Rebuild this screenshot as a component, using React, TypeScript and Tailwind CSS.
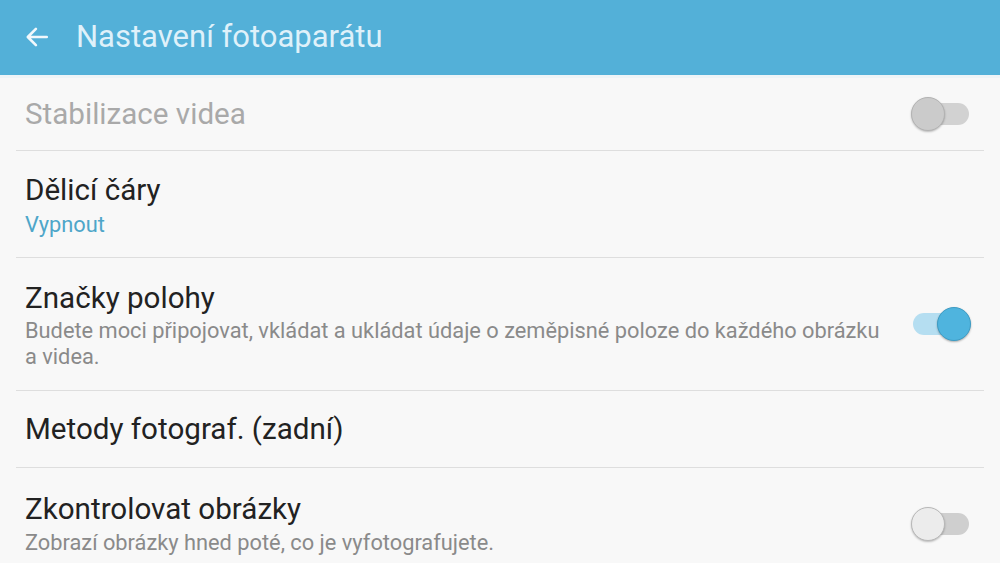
import React from "react";

function Toggle({ on, disabled }: { on: boolean; disabled?: boolean }) {
  if (on) {
    return (
      <div className="relative w-[60px] h-[36px] flex items-center">
        <div className="w-[54px] h-[22px] rounded-full bg-[#b5def1] ml-[2px]" />
        <div className="absolute right-0 top-[1px] w-[34px] h-[34px] rounded-full bg-[#4fb4de] border border-[#3d9cc4] shadow-[0_1px_2px_rgba(0,0,0,0.3)]" />
      </div>
    );
  }
  return (
    <div className="relative w-[60px] h-[36px] flex items-center">
      <div className={`w-[56px] h-[22px] rounded-full ml-[2px] ${disabled ? "bg-[#d2d2d2]" : "bg-[#cfcfcf]"}`} />
      <div
        className={`absolute left-0 top-[1px] w-[34px] h-[34px] rounded-full border shadow-[0_1px_2px_rgba(0,0,0,0.25)] ${
          disabled ? "bg-[#cbcbcb] border-[#b3b3b3]" : "bg-[#ececec] border-[#b8b8b8]"
        }`}
      />
    </div>
  );
}

function Divider() {
  return <div className="mx-[16px] h-px bg-[#dedede]" />;
}

export default function App() {
  const font = { fontFamily: "Roboto, 'Noto Sans', sans-serif" };
  return (
    <div className="w-[1000px] h-[563px] overflow-hidden bg-[#f8f8f8]" style={font}>
      <div className="h-[75px] bg-[#53b0d8] flex items-center pl-[24px]">
        <svg width="26" height="26" viewBox="0 0 24 24" className="mt-[-1px]">
          <path d="M21 12H4M11 4.5L3.5 12L11 19.5" fill="none" stroke="#f1f8fc" strokeWidth="2.4" strokeLinecap="round" strokeLinejoin="round" />
        </svg>
        <div className="ml-[26px] text-[31px] text-[#dff1fa] mt-[-1px]">Nastavení fotoaparátu</div>
      </div>
      <div className="h-[3px] bg-[#eef4f7]" />

      <div className="h-[72px] flex items-center justify-between pl-[25px] pr-[29px]">
        <div className="text-[29.6px] text-[#a9a9a9]">Stabilizace videa</div>
        <Toggle on={false} disabled />
      </div>
      <Divider />

      <div className="h-[106px] flex flex-col pt-[19px] pl-[25px]">
        <div className="text-[29.6px] text-[#222] leading-[40px]">Dělicí čáry</div>
        <div className="text-[21.8px] text-[#4ea6c9] leading-[30px]">Vypnout</div>
      </div>
      <Divider />

      <div className="h-[132px] flex items-center justify-between pl-[25px] pr-[29px]">
        <div className="flex flex-col">
          <div className="text-[29.6px] text-[#222] leading-[40px]">Značky polohy</div>
          <div className="text-[21.8px] text-[#8a8a8a] leading-[26px] w-[870px]">
            Budete moci připojovat, vkládat a ukládat údaje o zeměpisné poloze do každého obrázku a videa.
          </div>
        </div>
        <Toggle on />
      </div>
      <Divider />

      <div className="h-[76px] flex items-center pl-[25px]">
        <div className="text-[29.6px] text-[#222]">Metody fotograf. (zadní)</div>
      </div>
      <Divider />

      <div className="h-[106px] flex items-center justify-between pl-[25px] pr-[29px]">
        <div className="flex flex-col self-start pt-[21px]">
          <div className="text-[29.6px] text-[#222] leading-[40px]">Zkontrolovat obrázky</div>
          <div className="text-[21.8px] text-[#8a8a8a] leading-[28px]">Zobrazí obrázky hned poté, co je vyfotografujete.</div>
        </div>
        <div className="self-start mt-[38px]">
          <Toggle on={false} />
        </div>
      </div>
    </div>
  );
}
